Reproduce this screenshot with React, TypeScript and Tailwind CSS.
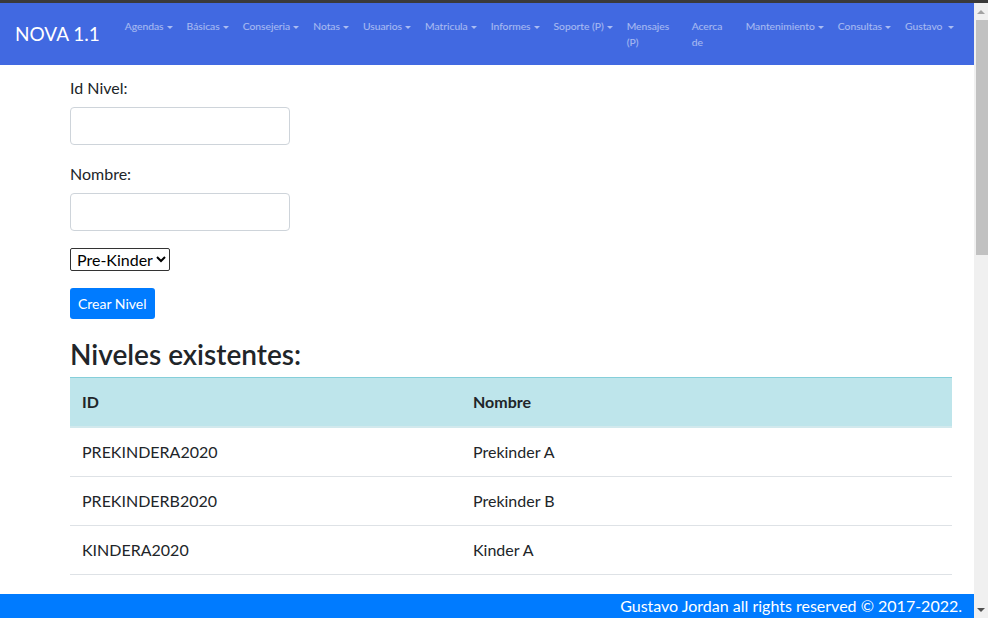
import React from 'react';

const navItems = [
  { label: 'Agendas', caret: true },
  { label: 'Básicas', caret: true },
  { label: 'Consejeria', caret: true },
  { label: 'Notas', caret: true },
  { label: 'Usuarios', caret: true },
  { label: 'Matricula', caret: true },
  { label: 'Informes', caret: true },
  { label: 'Soporte (P)', caret: true },
  { label: 'Mensajes (P)', caret: false, wrap: 'w-[65px]' },
  { label: 'Acerca de', caret: false, wrap: 'w-[54px]' },
  { label: 'Mantenimiento', caret: true },
  { label: 'Consultas', caret: true },
  { label: 'Gustavo', caret: true, extra: true },
];

const niveles = [
  { id: 'PREKINDERA2020', nombre: 'Prekinder A' },
  { id: 'PREKINDERB2020', nombre: 'Prekinder B' },
  { id: 'KINDERA2020', nombre: 'Kinder A' },
  { id: 'KINDERB2020', nombre: 'Kinder B' },
];

function Caret() {
  return (
    <span className="inline-block w-0 h-0 ml-[3px] align-middle border-t-[3px] border-t-current border-x-[3px] border-x-transparent" />
  );
}

export default function App() {
  return (
    <div
      className="w-[988px] h-[618px] overflow-hidden flex flex-col bg-white text-[#212529]"
      style={{ fontFamily: 'Lato, "Open Sans", sans-serif' }}
    >
      {/* browser edge */}
      <div className="h-[3px] bg-[#3a3a3a]" />

      <div className="flex-1 flex min-h-0">
        <div className="flex-1 flex flex-col min-w-0">
          {/* Navbar */}
          <nav className="h-[62px] bg-[#4169e1] flex items-start px-[15px]">
            <span className="self-center shrink-0 whitespace-nowrap text-[19px] text-white leading-[30px] mr-[18px]">NOVA 1.1</span>
            <ul className="flex mt-[15px] text-[10.3px] leading-[16px] text-white/55">
              {navItems.map((item) => (
                <li
                  key={item.label}
                  className={
                    item.wrap
                      ? `${item.wrap} shrink-0 px-[7px]`
                      : 'shrink-0 px-[7px] whitespace-nowrap'
                  }
                >
                  {item.label}
                  {item.caret && (item.extra ? <span className="ml-[3px]"><Caret /></span> : <Caret />)}
                </li>
              ))}
            </ul>
          </nav>

          {/* Content */}
          <main className="flex-1 min-h-0 overflow-hidden pl-[70px] pr-[22px] pt-[11px]">
            <label className="block text-[16px] leading-6">Id Nivel:</label>
            <input className="block mt-[7px] w-[220px] h-[38px] border border-[#ced4da] rounded-[4px]" />

            <label className="block mt-[17px] text-[16px] leading-6">Nombre:</label>
            <input className="block mt-[7px] w-[220px] h-[38px] border border-[#ced4da] rounded-[4px]" />

            <select className="block mt-[17px] h-[23px] border border-[#333] rounded-[2px] text-[16px] pl-[2px] bg-white text-black appearance-auto">
              <option>Pre-Kinder</option>
            </select>

            <button className="block mt-[17px] h-[31px] px-[8px] bg-[#007bff] text-white text-[14px] rounded-[3px]">
              Crear Nivel
            </button>

            <h3 className="mt-[18px] mb-[6px] text-[28px] leading-[34px] font-semibold">Niveles existentes:</h3>

            <table className="w-full border-collapse text-[16px] leading-6">
              <thead>
                <tr className="bg-[#bee5eb] border-t border-[#86cfda] border-b-2 border-b-[#d2e9ed]">
                  <th className="w-[391px] text-left font-bold px-3 py-3">ID</th>
                  <th className="text-left font-bold px-3 py-3">Nombre</th>
                </tr>
              </thead>
              <tbody>
                {niveles.map((n) => (
                  <tr key={n.id} className="border-b border-[#dee2e6]">
                    <td className="px-3 py-3">{n.id}</td>
                    <td className="px-3 py-3">{n.nombre}</td>
                  </tr>
                ))}
              </tbody>
            </table>
          </main>

          {/* Footer */}
          <footer className="h-[24px] bg-[#007bff] text-white text-[16px] leading-[24px] text-right pr-[12px]">
            Gustavo Jordan all rights reserved © 2017-2022.
          </footer>
        </div>

        {/* Scrollbar */}
        <div className="w-[14px] bg-[#f0f0f0] flex flex-col items-center">
          <div className="h-[17px] flex items-center justify-center">
            <span className="inline-block w-0 h-0 border-b-[4px] border-b-[#a3a3a3] border-x-[4px] border-x-transparent" />
          </div>
          <div className="w-[12px] ml-[2px] h-[235px] bg-[#c1c1c1]" />
          <div className="flex-1" />
          <div className="h-[17px] flex items-center justify-center">
            <span className="inline-block w-0 h-0 border-t-[4px] border-t-[#505050] border-x-[4px] border-x-transparent" />
          </div>
        </div>
      </div>
    </div>
  );
}
